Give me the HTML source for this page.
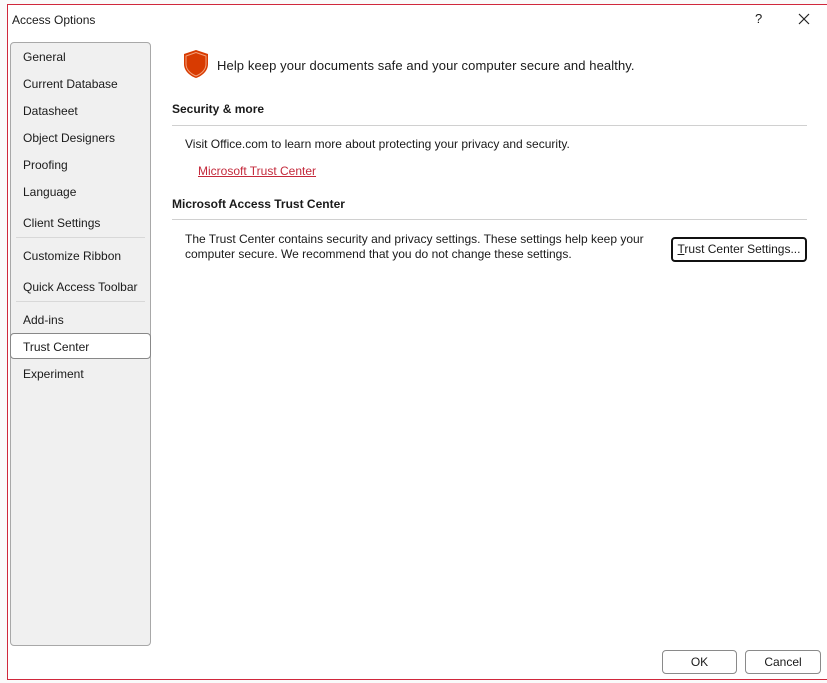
<!DOCTYPE html>
<html><head><style>
body{margin:0;width:827px;height:683px;overflow:hidden;background:#fafafa;font-family:"Liberation Sans",sans-serif;font-size:12px;color:#1a1a1a;position:relative}
.dlg{position:absolute;left:7px;top:4px;width:830px;height:676px;background:#fff;border:1px solid #d0283c;border-right:none;box-sizing:border-box}
.a{position:absolute;white-space:nowrap}
.side{position:absolute;left:10px;top:42px;width:141px;height:604px;background:#f0f0f0;border:1px solid #a8a8a8;border-radius:4px;box-sizing:border-box}
.sep{position:absolute;left:16px;width:129px;height:1px;background:#d8d8d8}
.line{position:absolute;left:172px;width:635px;height:1px;background:#d0d0d0}
.btn{position:absolute;border:1px solid #8a8a8a;border-radius:4px;background:#fff;text-align:center;box-sizing:border-box}
.w{letter-spacing:0.1px}
</style></head><body>
<div class="dlg"></div>
<div class="a" style="left:12px;top:13px;font-size:12px">Access Options</div>
<div class="a" style="left:755px;top:11px;font-size:13px">?</div>
<svg class="a" style="left:798px;top:13px" width="12" height="12"><path d="M1 1L11 11M11 1L1 11" stroke="#222" stroke-width="1.2"/></svg>
<div class="side"></div>
<div class="a" style="left:23px;top:50px">General</div>
<div class="a" style="left:23px;top:77px">Current Database</div>
<div class="a" style="left:23px;top:104px">Datasheet</div>
<div class="a" style="left:23px;top:131px">Object Designers</div>
<div class="a" style="left:23px;top:158px">Proofing</div>
<div class="a" style="left:23px;top:185px">Language</div>
<div class="a" style="left:23px;top:216px">Client Settings</div>
<div class="sep" style="top:237px"></div>
<div class="a" style="left:23px;top:249px">Customize Ribbon</div>
<div class="a" style="left:23px;top:280px">Quick Access Toolbar</div>
<div class="sep" style="top:301px"></div>
<div class="a" style="left:23px;top:313px">Add-ins</div>
<div style="position:absolute;left:10px;top:333px;width:141px;height:26px;background:#fff;border:1px solid #888;border-radius:4px;box-sizing:border-box"></div>
<div class="a" style="left:23px;top:340px">Trust Center</div>
<div class="a" style="left:23px;top:367px">Experiment</div>
<svg class="a" style="left:182px;top:49px" width="28" height="30" viewBox="0 0 28 30"><path d="M14 1L26 5V15C26 22 20 27 14 29C8 27 2 22 2 15V5Z" fill="#d83b01"/><path d="M14 3.5L24 7V15C24 21 19 25 14 27" fill="none" stroke="#f3a07a" stroke-width="1"/><path d="M14 3.5L4 7V15C4 21 9 25 14 27" fill="none" stroke="#f3a07a" stroke-width="1"/></svg>
<div class="a" style="left:217px;top:58px;font-size:13px;letter-spacing:0.1px">Help keep your documents safe and your computer secure and healthy.</div>
<div class="a" style="left:172px;top:102px;font-weight:bold">Security &amp; more</div>
<div class="line" style="top:125px"></div>
<div class="a" style="left:185px;top:137px">Visit Office.com to learn more about protecting your privacy and security.</div>
<div class="a" style="left:198px;top:164px;color:#c4293b;text-decoration:underline">Microsoft Trust Center</div>
<div class="a" style="left:172px;top:197px;font-weight:bold">Microsoft Access Trust Center</div>
<div class="line" style="top:219px"></div>
<div class="a" style="left:185px;top:232px;line-height:15px">The Trust Center contains security and privacy settings. These settings help keep your<br>computer secure. We recommend that you do not change these settings.</div>
<div class="btn" style="left:671px;top:237px;width:136px;height:25px;border:2px solid #111;line-height:21px"><u>T</u>rust Center Settings...</div>
<div class="btn" style="left:662px;top:650px;width:75px;height:24px;line-height:22px">OK</div>
<div class="btn" style="left:745px;top:650px;width:76px;height:24px;line-height:22px">Cancel</div>
</body></html>
